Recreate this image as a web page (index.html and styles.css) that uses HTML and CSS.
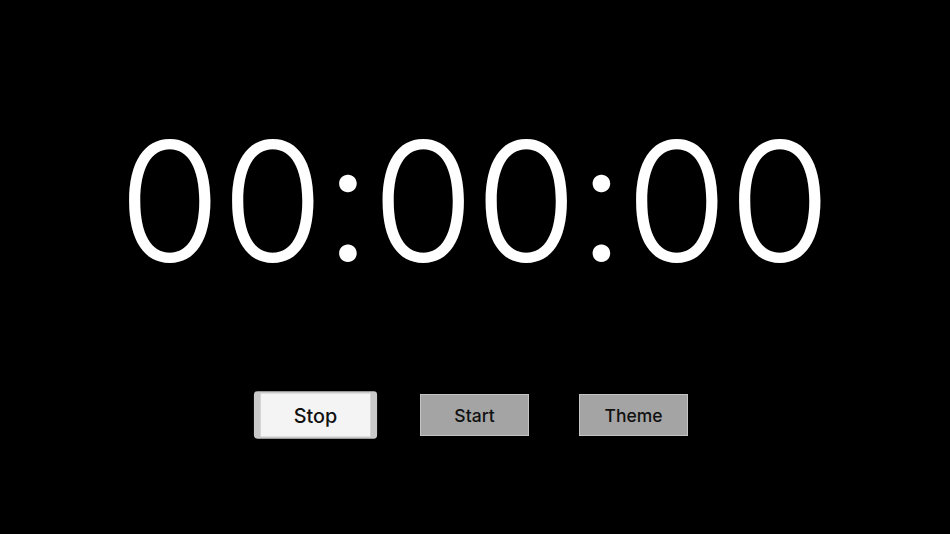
FILE: index.html
```html
<!DOCTYPE html>
<html>
<head>
<meta charset="utf-8">
<link rel="stylesheet" href="styles.css">
</head>
<body>
<main class="screen">
  <div class="timer">00:00:00</div>
  <div class="controls">
    <button class="btn btn-focused">Stop</button>
    <button class="btn">Start</button>
    <button class="btn">Theme</button>
  </div>
</main>
</body>
</html>
```
FILE: styles.css
```css
html, body {
  margin: 0;
  padding: 0;
  background: #000;
}
.screen {
  width: 950px;
  height: 534px;
  display: flex;
  flex-direction: column;
  align-items: center;
  font-family: Inter, "Noto Sans", sans-serif;
}
.timer {
  margin-top: 96px;
  color: #fff;
  font-weight: 300;
  font-size: 166px;
  letter-spacing: 0.5px;
  line-height: 210px;
  height: 210px;
  white-space: nowrap;
}
.controls {
  margin-top: 88px;
  display: flex;
  gap: 50px;
  margin-left: -1px;
}
.btn {
  width: 109px;
  height: 42px;
  box-sizing: border-box;
  background: #a4a4a4;
  border: 1px solid #c4c4c4;
  color: #111;
  font-family: Inter, "Noto Sans", sans-serif;
  font-size: 17.5px;
  font-weight: 500;
  padding: 0;
  border-radius: 0;
}
.btn-focused {
  background: #f4f4f4;
  border-style: solid;
  border-color: #c9c9c9;
  border-width: 2px 6px;
  border-radius: 3px;
  transform: scale(1.13);
}
```
